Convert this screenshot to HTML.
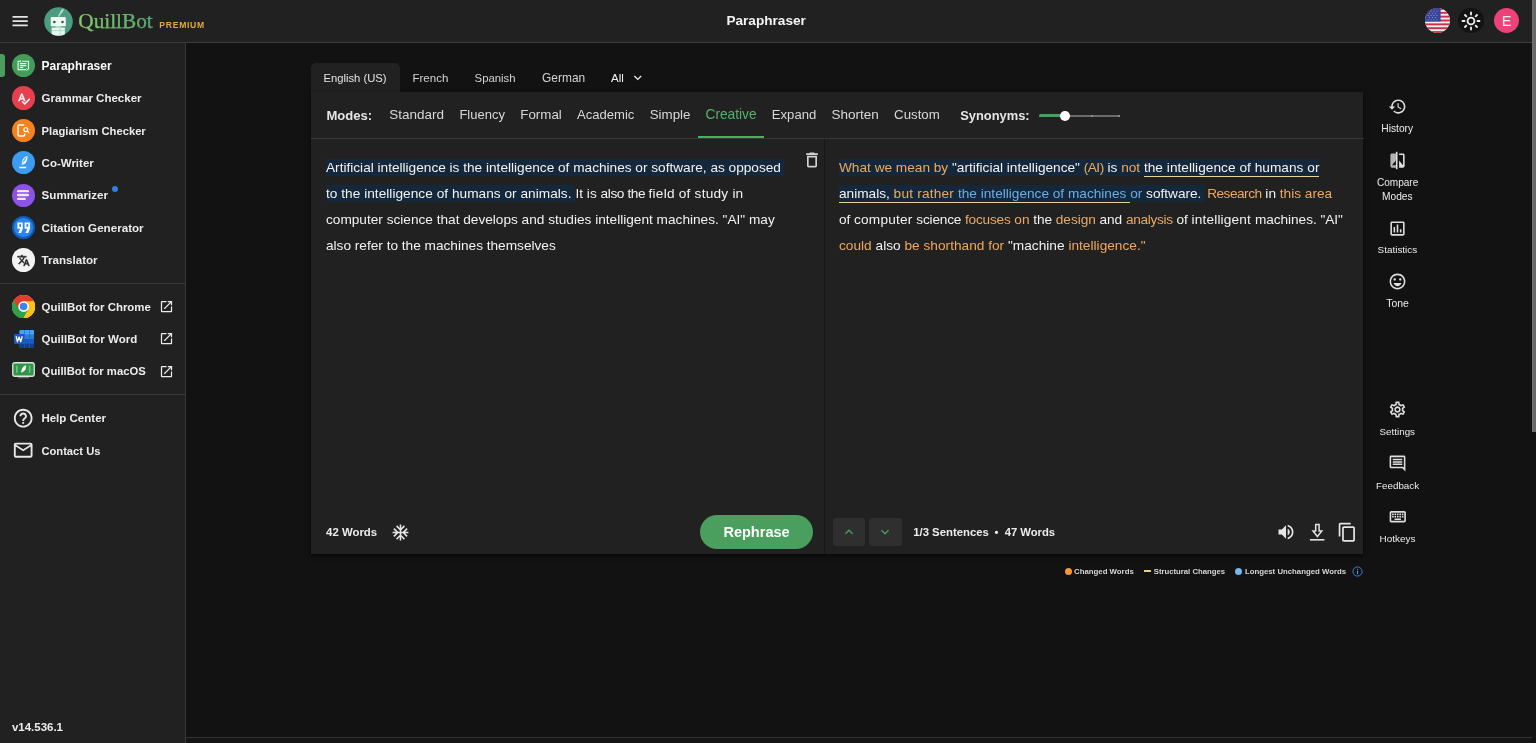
<!DOCTYPE html>
<html lang="en">
<head>
<meta charset="utf-8">
<title>Paraphraser</title>
<style>
*{box-sizing:border-box;margin:0;padding:0}
html,body{width:1536px;height:743px;overflow:hidden;background:#121212;color:#ececec;font-family:"Liberation Sans",sans-serif}
.abs{position:absolute}
.t{position:absolute;white-space:nowrap;line-height:16px}
#hdr{left:0;top:0;width:1532px;height:43px;background:#212121;border-bottom:1px solid #3c3c3c}
#side{left:0;top:43px;width:186px;height:700px;background:#212121;border-right:1px solid #383838}
.ico{position:absolute;border-radius:50%}
.sep{position:absolute;left:0;width:185px;height:1px;background:#3a3a3a}
#panel{left:310.6px;top:92px;width:1052.7px;height:462px;background:#212121;box-shadow:0 2px 5px rgba(0,0,0,.55)}
#tab{left:310.5px;top:63px;width:89px;height:30px;background:#212121;border-radius:5px 5px 0 0}
.para{position:absolute;font-size:13.65px;line-height:26px;color:#f2f2f2;white-space:nowrap}
.para div{height:26px}
.hl{background:#15283b;padding:.9px 0 1.8px}
.o{color:#ecaa60}
.bl{color:#69aee6}
.u{border-bottom:1.8px solid #e8d294;padding-bottom:1.9px}
</style>
</head>
<body>
<div id="root" style="position:absolute;left:0;top:0;width:1536px;height:743px;will-change:transform">

<div id="hdr" class="abs"></div>
<svg class="abs" style="left:10.1px;top:10.95px" width="20.3" height="20.3" viewBox="0 0 24 24" ><path fill="#e4e4e4" d="M3 18h18v-2H3v2zm0-5h18v-2H3v2zm0-7v2h18V6H3z"/></svg>
<svg class="abs" style="left:44.300px;top:6.800px" width="29" height="29" viewBox="0 0 29 29">
<defs><clipPath id="lc"><circle cx="14.500" cy="14.500" r="14.300"/></clipPath></defs>
<circle cx="14.500" cy="14.500" r="14.300" fill="#4b9c80"/>
<g clip-path="url(#lc)">
<path d="M18.300 2.300c.700-.400 1.300-.400 1.300-.400s.100 1.300-.700 2.700c-.800 1.400-3.200 4.500-3.800 5.200l-1.100-.600c.800-1.300 2.800-5.700 4.300-6.900z" fill="#d9efe3"/>
<path d="M18.600 3.400l-3.300 5.400" stroke="#4b9c80" stroke-width=".5"/>
<rect x="6.700" y="10" width="15.100" height="9.300" rx=".9" fill="#eefaf3"/>
<circle cx="10.400" cy="14.900" r="1.250" fill="#2f4d42"/><circle cx="18.500" cy="14.900" r="1.250" fill="#2f4d42"/>
<rect x="7.600" y="20.500" width="13.300" height="9" fill="#e6f6ee"/>
<rect x="11.500" y="19.300" width="5.500" height="1.200" fill="#cfe8dc"/>
<path d="M7.600 23.600h13.300M16.200 20.500v9" stroke="#9ac7b5" stroke-width=".6" fill="none"/>
</g>
</svg>
<div class="t " style="left:78.3px;top:12.92px;font-size:21.28px;font-weight:400;color:#6bb36a;font-family:'Liberation Serif',serif;background:linear-gradient(90deg,#93c96b 0%,#73b96e 45%,#4f9f78 100%);-webkit-background-clip:text;background-clip:text;-webkit-text-fill-color:transparent;-webkit-text-stroke:.25px #6bb36a;line-height:30px;margin-top:-7px;padding:0 2px;margin-left:-2px;">QuillBot</div>
<div class="t " style="left:159.3px;top:17.12px;font-size:8.6px;font-weight:700;color:#e2a93f;font-family:'Liberation Sans',sans-serif;letter-spacing:.72px">PREMIUM</div>
<div class="t " style="left:726.4px;top:13.48px;font-size:13.62px;font-weight:700;color:#f4f4f4;font-family:'Liberation Sans',sans-serif;">Paraphraser</div>
<svg class="abs" style="left:1424.500px;top:8.100px" width="25" height="25" viewBox="0 0 25 25">
<defs><clipPath id="fc"><circle cx="12.500" cy="12.500" r="12.500"/></clipPath></defs>
<g clip-path="url(#fc)">
<rect width="25" height="25" fill="#f3eded"/>
<g fill="#c8324a"><rect y="0" width="25" height="1.920"/><rect y="3.850" width="25" height="1.920"/><rect y="7.690" width="25" height="1.920"/><rect y="11.540" width="25" height="1.920"/><rect y="15.380" width="25" height="1.920"/><rect y="19.230" width="25" height="1.920"/><rect y="23.080" width="25" height="1.920"/></g>
<rect width="15.600" height="13.460" fill="#39439a"/>
<g fill="#8f9ad0"><circle cx="3" cy="3" r=".55"/><circle cx="6" cy="3" r=".55"/><circle cx="9" cy="3" r=".55"/><circle cx="12" cy="3" r=".55"/><circle cx="4.500" cy="5.200" r=".55"/><circle cx="7.500" cy="5.200" r=".55"/><circle cx="10.500" cy="5.200" r=".55"/><circle cx="3" cy="7.400" r=".55"/><circle cx="6" cy="7.400" r=".55"/><circle cx="9" cy="7.400" r=".55"/><circle cx="12" cy="7.400" r=".55"/><circle cx="4.500" cy="9.600" r=".55"/><circle cx="7.500" cy="9.600" r=".55"/><circle cx="10.500" cy="9.600" r=".55"/><circle cx="3" cy="11.800" r=".55"/><circle cx="6" cy="11.800" r=".55"/><circle cx="9" cy="11.800" r=".55"/><circle cx="12" cy="11.800" r=".55"/></g>
</g></svg>
<div class="ico" style="left:1458.400px;top:8px;width:25.400px;height:25.400px;background:#131313"></div>
<svg class="abs" style="left:1461.100px;top:10.700px" width="20" height="20" viewBox="0 0 24 24" fill="none" stroke="#f1f1f1" stroke-width="2.200" stroke-linecap="round">
<circle cx="12" cy="12" r="4.100"/>
<path d="M12 1.800v2.400M12 19.800v2.400M1.800 12h2.400M19.800 12h2.400M4.800 4.800l1.600 1.600M17.600 17.600l1.600 1.600M19.200 4.800l-1.600 1.600M6.400 17.600l-1.600 1.600"/>
</svg>
<div class="ico" style="left:1494px;top:8.200px;width:25.300px;height:25.300px;background:#ee4079"></div>
<div class="t " style="left:1406.7px;width:200px;text-align:center;top:13.28px;font-size:14.5px;font-weight:400;color:#fdeef3;font-family:'Liberation Sans',sans-serif;">E</div>
<div id="side" class="abs"></div>
<div class="abs" style="left:0;top:54px;width:4.500px;height:23px;background:#4a9d5c;border-radius:0 3px 3px 0"></div>
<div class="ico" style="left:11.800px;top:54.0px;width:23.200px;height:23.200px;background:#419e58"><svg style="position:absolute;left:5.300px;top:6.300px" width="12.600" height="11" viewBox="0 0 12.600 11" fill="none" stroke="#eef7f0" stroke-width="1.150"><path d="M3.600 1.200H1.100v8.400h7.900M5.200 1.200h6.300v8.400"/><path d="M2.900 3.700h6.400M2.900 5.600h6.400" stroke-width="1.300"/><path d="M2.900 7.500h3.400" stroke-width="1.200"/><path d="M4.400 0l-1.400 1.200 1.400 1.200M9.300 8.400l1.400 1.200-1.400 1.200" stroke-width=".8"/></svg></div>
<div class="ico" style="left:11.800px;top:86.4px;width:23.200px;height:23.200px;background:#e6404f"><svg style="position:absolute;left:4.9px;top:5.3px" width="13.6" height="13.6" viewBox="0 0 24 24"><path stroke="#fff" stroke-width=".9" fill="#fff" d="M12.450 16h2.090L9.430 3H7.570L2.460 16h2.090l1.120-3h5.640l1.140 3zm-6.020-5L8.500 5.480 10.570 11H6.430zm15.160.590l-8.090 8.090L9.830 16l-1.410 1.410 5.090 5.090L23 13l-1.410-1.410z"/></svg></div>
<div class="ico" style="left:11.800px;top:118.8px;width:23.200px;height:23.200px;background:#f5821f"><svg style="position:absolute;left:5.600px;top:5.300px" width="13" height="13" viewBox="0 0 13 13" fill="none" stroke="#fff" stroke-width="1.400"><path d="M7.200 1H2.200C1.500 1 1 1.500 1 2.200v8.600c0 .700.500 1.200 1.200 1.200h4.300c.700 0 1.200-.500 1.200-1.200V9.600"/><circle cx="8.800" cy="5.600" r="2" stroke-width="1.300"/><path d="M10.300 7.100l1.700 1.700" stroke-width="1.300"/></svg></div>
<div class="ico" style="left:11.800px;top:151.2px;width:23.200px;height:23.200px;background:#3c9cf3"><svg style="position:absolute;left:6.200px;top:4.200px" width="11" height="14" viewBox="0 0 11 14" fill="none"><path d="M9.400 .900C6.600 1.500 5 3.300 4.300 6.100L3.500 9.800l1.300-.300C7.600 8.700 9.700 6.100 9.400 .900z" fill="#fff"/><path d="M8.300 2.300L4.600 8.200M5.300 5.600l2.200-.800M6.200 3.900l1.700-.500" stroke="#3c9cf3" stroke-width=".75"/><path d="M1.200 12.500h7" stroke="#fff" stroke-width="1.500"/></svg></div>
<div class="ico" style="left:11.800px;top:183.6px;width:23.200px;height:23.200px;background:#8d52e6"><svg style="position:absolute;left:5.700px;top:6.700px" width="12" height="10" viewBox="0 0 12 10" stroke="#efe6fb" stroke-width="2.300" stroke-linecap="round"><path d="M1.100 1.200h9.800M1.100 5h9.800M1.100 8.900h6.600"/></svg></div>
<div class="ico" style="left:11.800px;top:216.0px;width:23.200px;height:23.200px;background:#2a86ec;border:2.200px solid #0f5cb8"><svg style="position:absolute;left:-1.300px;top:-3.300px" width="21.400" height="25.400" viewBox="0 0 24 24" preserveAspectRatio="none"><path fill="#fff" d="M6 17h3l2-4V7H5v6h3zm8 0h3l2-4V7h-6v6h3z"/><rect x="7.100" y="8.600" width="1.900" height="2.600" fill="#2a86ec"/><rect x="15.100" y="8.600" width="1.900" height="2.600" fill="#2a86ec"/></svg></div>
<div class="ico" style="left:11.800px;top:248.4px;width:23.200px;height:23.200px;background:#f3f3f3"><svg style="position:absolute;left:5.3px;top:5.4px" width="13" height="13" viewBox="0 0 24 24"><path stroke="#222" stroke-width=".9" fill="#222" d="M12.870 15.070l-2.540-2.510.030-.030c1.740-1.940 2.980-4.170 3.710-6.530H17V4h-7V2H8v2H1v1.990h11.170C11.500 7.920 10.440 9.750 9 11.350 8.070 10.320 7.300 9.190 6.690 8h-2c.730 1.630 1.730 3.170 2.980 4.560l-5.090 5.020L4 19l5-5 3.110 3.110.760-2.040zM18.500 10h-2L12 22h2l1.120-3h4.750L21 22h2l-4.500-12zm-2.620 7l1.620-4.330L19.120 17h-3.240z"/></svg></div>
<div class="ico" style="left:112.100px;top:186.300px;width:6px;height:6px;background:#2f7fe3"></div>
<div class="t " style="left:41.6px;top:57.64px;font-size:12.01px;font-weight:700;color:#fbfbfb;font-family:'Liberation Sans',sans-serif;">Paraphraser</div>
<div class="t " style="left:41.6px;top:90.20px;font-size:11.54px;font-weight:700;color:#ececec;font-family:'Liberation Sans',sans-serif;">Grammar Checker</div>
<div class="t " style="left:41.6px;top:122.71px;font-size:11.23px;font-weight:700;color:#ececec;font-family:'Liberation Sans',sans-serif;">Plagiarism Checker</div>
<div class="t " style="left:41.6px;top:155.02px;font-size:11.5px;font-weight:700;color:#ececec;font-family:'Liberation Sans',sans-serif;">Co-Writer</div>
<div class="t " style="left:41.6px;top:187.38px;font-size:11.6px;font-weight:700;color:#ececec;font-family:'Liberation Sans',sans-serif;">Summarizer</div>
<div class="t " style="left:41.6px;top:219.77px;font-size:11.64px;font-weight:700;color:#ececec;font-family:'Liberation Sans',sans-serif;">Citation Generator</div>
<div class="t " style="left:41.6px;top:252.19px;font-size:11.58px;font-weight:700;color:#ececec;font-family:'Liberation Sans',sans-serif;">Translator</div>
<div class="sep" style="top:283px"></div>
<svg class="abs" style="left:11.800px;top:294.900px" width="23.200" height="23.200" viewBox="0 0 48 48">
<circle cx="24" cy="24" r="24" fill="#fff"/>
<path d="M24 24L3.200 12A24 24 0 0 1 44.800 12z" fill="#e33b2e"/>
<path d="M24 24L44.800 12A24 24 0 0 1 24 48z" fill="#fbc116"/>
<path d="M24 24L24 48A24 24 0 0 1 3.200 12z" fill="#2ea24b"/>
<path d="M24 13h20.300A24 24 0 0 0 3.200 12L13.400 29.600z" fill="#e33b2e"/>
<path d="M33.500 29.500L23.400 47.990A24 24 0 0 0 44.300 13H24z" fill="#fbc116"/>
<path d="M14.500 29.500L3.200 12A24 24 0 0 0 23.400 47.990L33.500 29.500z" fill="#2ea24b"/>
<circle cx="24" cy="24" r="11" fill="#fff"/><circle cx="24" cy="24" r="7.800" fill="#3f83f1"/>
</svg>
<svg class="abs" style="left:13.500px;top:329.800px" width="20.500" height="18" viewBox="0 0 41 36">
<rect x="11" y="0" width="30" height="36" rx="3" fill="#2b7cd3"/>
<rect x="11" y="0" width="30" height="9" rx="3" fill="#41a5ee"/>
<rect x="11" y="18" width="30" height="9" fill="#185abd"/>
<rect x="11" y="27" width="30" height="9" rx="3" fill="#103f91"/>
<path d="M21 0v36M31 0v36" stroke="#1f64c2" stroke-width="1.200"/>
<rect x="0" y="8" width="21" height="20" rx="2.200" fill="#185abd"/>
<path d="M4.200 12.500l2.700 11 3.300-9.500 3.300 9.500 2.900-11" fill="none" stroke="#fff" stroke-width="2.600" stroke-linejoin="round"/>
</svg>
<svg class="abs" style="left:12px;top:361.600px" width="23" height="17" viewBox="0 0 46 34">
<rect x="1.500" y="1.500" width="43" height="27" rx="4.500" fill="#2f9446" stroke="#dfe7e1" stroke-width="2.600"/>
<path d="M28.500 6.500c-6 1.500-9.500 6-10.500 15l3-1.500c5-2.500 8-6.500 7.500-13.500z" fill="#fff"/>
<rect x="8" y="7.500" width="3.400" height="14" fill="#6cbf7e"/><rect x="33.600" y="7.500" width="3.400" height="14" fill="#6cbf7e"/>
<rect x="12" y="30.600" width="22" height="1.800" fill="#7d8a80"/>
</svg>
<div class="t " style="left:41.6px;top:298.54px;font-size:11.44px;font-weight:700;color:#ececec;font-family:'Liberation Sans',sans-serif;">QuillBot for Chrome</div>
<svg class="abs" style="left:158.6px;top:298.8px" width="15" height="15" viewBox="0 0 24 24" ><path fill="#ececec" d="M19 19H5V5h7V3H5c-1.110 0-2 .900-2 2v14c0 1.100.890 2 2 2h14c1.100 0 2-.900 2-2v-7h-2v7zM14 3v2h3.590l-9.830 9.830 1.410 1.410L19 6.410V10h2V3h-7z"/></svg>
<div class="t " style="left:41.6px;top:331.02px;font-size:11.5px;font-weight:700;color:#ececec;font-family:'Liberation Sans',sans-serif;">QuillBot for Word</div>
<svg class="abs" style="left:158.6px;top:331.3px" width="15" height="15" viewBox="0 0 24 24" ><path fill="#ececec" d="M19 19H5V5h7V3H5c-1.110 0-2 .900-2 2v14c0 1.100.890 2 2 2h14c1.100 0 2-.900 2-2v-7h-2v7zM14 3v2h3.590l-9.830 9.830 1.410 1.410L19 6.410V10h2V3h-7z"/></svg>
<div class="t " style="left:41.6px;top:363.48px;font-size:11.3px;font-weight:700;color:#ececec;font-family:'Liberation Sans',sans-serif;">QuillBot for macOS</div>
<svg class="abs" style="left:158.6px;top:363.7px" width="15" height="15" viewBox="0 0 24 24" ><path fill="#ececec" d="M19 19H5V5h7V3H5c-1.110 0-2 .900-2 2v14c0 1.100.890 2 2 2h14c1.100 0 2-.900 2-2v-7h-2v7zM14 3v2h3.590l-9.830 9.830 1.410 1.410L19 6.410V10h2V3h-7z"/></svg>
<div class="sep" style="top:394px"></div>
<svg class="abs" style="left:12.1px;top:407px" width="22.4" height="22.4" viewBox="0 0 24 24" ><path fill="#e8e8e8" d="M11 18h2v-2h-2v2zm1-16C6.480 2 2 6.480 2 12s4.480 10 10 10 10-4.480 10-10S17.520 2 12 2zm0 18c-4.410 0-8-3.590-8-8s3.590-8 8-8 8 3.590 8 8-3.590 8-8 8zm0-14c-2.210 0-4 1.790-4 4h2c0-1.100.900-2 2-2s2 .900 2 2c0 2-3 1.750-3 5h2c0-2.250 3-2.500 3-5 0-2.210-1.790-4-4-4z"/></svg>
<svg class="abs" style="left:12.1px;top:439.3px" width="22.4" height="22.4" viewBox="0 0 24 24" ><path fill="#e8e8e8" d="M20 4H4c-1.100 0-1.990.900-1.990 2L2 18c0 1.100.900 2 2 2h16c1.100 0 2-.900 2-2V6c0-1.100-.900-2-2-2zm0 14H4V8l8 5 8-5v10zm-8-7L4 6h16l-8 5z"/></svg>
<div class="t " style="left:41.4px;top:410.40px;font-size:11.53px;font-weight:700;color:#ececec;font-family:'Liberation Sans',sans-serif;">Help Center</div>
<div class="t " style="left:41.4px;top:442.82px;font-size:11.2px;font-weight:700;color:#ececec;font-family:'Liberation Sans',sans-serif;">Contact Us</div>
<div class="t " style="left:12px;top:719.33px;font-size:11.46px;font-weight:700;color:#ececec;font-family:'Liberation Sans',sans-serif;">v14.536.1</div>
<div id="tab" class="abs"></div><div id="panel" class="abs"></div>
<div class="t " style="left:323.4px;top:70.09px;font-size:11.28px;font-weight:400;color:#e3e3e3;font-family:'Liberation Sans',sans-serif;">English (US)</div>
<div class="t " style="left:412.5px;top:70.02px;font-size:11.5px;font-weight:400;color:#d4d4d4;font-family:'Liberation Sans',sans-serif;">French</div>
<div class="t " style="left:474.6px;top:70.07px;font-size:11.35px;font-weight:400;color:#d4d4d4;font-family:'Liberation Sans',sans-serif;">Spanish</div>
<div class="t " style="left:542.1px;top:69.87px;font-size:11.93px;font-weight:400;color:#d4d4d4;font-family:'Liberation Sans',sans-serif;">German</div>
<div class="t " style="left:611px;top:69.98px;font-size:11.61px;font-weight:400;color:#f3f3f3;font-family:'Liberation Sans',sans-serif;">All</div>
<svg class="abs" style="left:630.35px;top:69.95px" width="15.5" height="15.5" viewBox="0 0 24 24" ><path fill="#ededed" d="M16.590 8.590L12 13.170 7.410 8.590 6 10l6 6 6-6z"/></svg>
<div class="t " style="left:326.5px;top:107.67px;font-size:13.06px;font-weight:700;color:#e6e6e6;font-family:'Liberation Sans',sans-serif;">Modes:</div>
<div class="t " style="left:389.3px;top:106.72px;font-size:13.5px;font-weight:400;color:#d8d8d8;font-family:'Liberation Sans',sans-serif;">Standard</div>
<div class="t " style="left:459.4px;top:106.89px;font-size:13.02px;font-weight:400;color:#d8d8d8;font-family:'Liberation Sans',sans-serif;">Fluency</div>
<div class="t " style="left:520.3px;top:106.78px;font-size:13.34px;font-weight:400;color:#d8d8d8;font-family:'Liberation Sans',sans-serif;">Formal</div>
<div class="t " style="left:577px;top:106.87px;font-size:13.07px;font-weight:400;color:#d8d8d8;font-family:'Liberation Sans',sans-serif;">Academic</div>
<div class="t " style="left:649.7px;top:106.77px;font-size:13.35px;font-weight:400;color:#d8d8d8;font-family:'Liberation Sans',sans-serif;">Simple</div>
<div class="t " style="left:705.5px;top:106.65px;font-size:13.72px;font-weight:400;color:#59b26b;font-family:'Liberation Sans',sans-serif;">Creative</div>
<div class="t " style="left:771.8px;top:106.85px;font-size:13.12px;font-weight:400;color:#d8d8d8;font-family:'Liberation Sans',sans-serif;">Expand</div>
<div class="t " style="left:831.5px;top:106.71px;font-size:13.53px;font-weight:400;color:#d8d8d8;font-family:'Liberation Sans',sans-serif;">Shorten</div>
<div class="t " style="left:894.1px;top:106.81px;font-size:13.26px;font-weight:400;color:#d8d8d8;font-family:'Liberation Sans',sans-serif;">Custom</div>
<div class="abs" style="left:697.500px;top:136px;width:66.500px;height:2px;background:#4cae61"></div>
<div class="t " style="left:960.2px;top:107.54px;font-size:12.88px;font-weight:700;color:#e6e6e6;font-family:'Liberation Sans',sans-serif;">Synonyms:</div>
<div class="abs" style="left:1039px;top:114.900px;width:81.300px;height:1.800px;background:#6a6a6a;border-radius:1px"></div>
<div class="abs" style="left:1039px;top:114.300px;width:24px;height:3px;background:#4a9e5e;border-radius:1.500px"></div>
<div class="abs" style="left:1091px;top:114.800px;width:2px;height:2px;background:#9a9a9a;border-radius:1px"></div>
<div class="abs" style="left:1118.300px;top:114.800px;width:2px;height:2px;background:#9a9a9a;border-radius:1px"></div>
<div class="ico" style="left:1060.400px;top:110.900px;width:9.800px;height:9.800px;background:#fff"></div>
<div class="abs" style="left:310.500px;top:138px;width:1053px;height:1px;background:#373737"></div>
<div class="abs" style="left:824px;top:139px;width:1px;height:415px;background:#181818"></div>
<svg class="abs" style="left:801.85px;top:149.7px" width="20" height="20" viewBox="0 0 24 24" ><path fill="#d2d2d2" d="M6 19c0 1.100.900 2 2 2h8c1.100 0 2-.900 2-2V7H6v12zM8 9h8v10H8V9zm7.500-5l-1-1h-5l-1 1H5v2h14V4h-3.500z"/></svg>
<div class="para" style="left:326px;top:154.600px">
<div id="L1"><span class="hl">Artificial intelligence is the intelligence of machines or software, as opposed</span><span class="hl" style="padding-right:3px"></span></div>
<div id="L2" style="letter-spacing:.034px"><span class="hl">to the intelligence of humans or animals. </span>It is <span style="letter-spacing:-.4px">also the </span><span style="letter-spacing:.23px">field of study </span>in</div>
<div id="L3">computer science that develops and studies intelligent machines. "AI" may</div>
<div id="L4">also refer to the machines themselves</div>
</div>
<div class="para" style="left:839px;top:154.600px">
<div id="R1"><span class="hl"><span class="o">What we mean by</span> "artificial intelligence" <span class="o" style="letter-spacing:-.5px">(AI)</span> is <span class="o">not</span> <span class="u" style="letter-spacing:.04px">the intelligence of humans or</span></span></div>
<div id="R2"><span class="hl"><span class="u">animals, <span class="o" style="letter-spacing:.2px">but rather</span><span style="letter-spacing:.2px"> </span><span class="bl">the intelligence of machines</span> </span><span class="bl">or</span> software. </span><span class="o" style="letter-spacing:-.5px;margin-left:2px">Research</span> in <span class="o">this area</span></div>
<div id="R3" style="letter-spacing:-.043px">of <span style="letter-spacing:.2px">computer</span> <span style="letter-spacing:-.18px">science </span><span class="o"><span style="letter-spacing:-.18px">focuses</span> on</span> the <span class="o">design</span> and <span class="o" style="letter-spacing:-.3px">analysis</span> of <span style="letter-spacing:.16px">intelligent </span>machines. "AI"</div>
<div id="R4" style="letter-spacing:.022px"><span class="o">could</span> also <span class="o">be shorthand for</span> "machine <span class="o">intelligence."</span></div>
</div>
<div class="t " style="left:326.1px;top:524.45px;font-size:11.4px;font-weight:700;color:#ececec;font-family:'Liberation Sans',sans-serif;">42 Words</div>
<svg class="abs" style="left:390.6px;top:522.9px" width="19" height="19" viewBox="0 0 24 24" ><path fill="#e6e6e6" d="M22 11h-4.170l3.240-3.240-1.410-1.420L15 11h-2V9l4.660-4.660-1.420-1.410L13 6.170V2h-2v4.170L7.760 2.930 6.340 4.340 11 9v2H9L4.340 6.340 2.930 7.760 6.170 11H2v2h4.170l-3.240 3.240 1.410 1.420L9 13h2v2l-4.660 4.660 1.420 1.410L11 17.830V22h2v-4.170l3.240 3.240 1.420-1.410L13 15v-2h2l4.660 4.660 1.410-1.420L17.830 13H22z"/></svg>
<div class="abs" style="left:700px;top:515px;width:113px;height:33.700px;border-radius:17px;background:#4a9e5e"></div>
<div class="t " style="left:723.4px;top:524.06px;font-size:14.55px;font-weight:700;color:#ffffff;font-family:'Liberation Sans',sans-serif;">Rephrase</div>
<div class="abs" style="left:833px;top:517.800px;width:32.400px;height:28.200px;border-radius:3px;background:#2f2f2f"></div>
<svg class="abs" style="left:841.2px;top:524px" width="16" height="16" viewBox="0 0 24 24" ><path fill="#4a9e5e" d="M12 8l-6 6 1.410 1.410L12 10.830l4.590 4.580L18 14z"/></svg>
<div class="abs" style="left:869.2px;top:517.800px;width:32.400px;height:28.200px;border-radius:3px;background:#2f2f2f"></div>
<svg class="abs" style="left:877.4000000000001px;top:524px" width="16" height="16" viewBox="0 0 24 24" ><path fill="#4a9e5e" d="M16.590 8.590L12 13.170 7.410 8.590 6 10l6 6 6-6z"/></svg>
<div class="t " style="left:913.2px;top:523.97px;font-size:11.35px;font-weight:700;color:#ececec;font-family:'Liberation Sans',sans-serif;">1/3 Sentences</div>
<div class="t " style="left:994.5px;top:523.97px;font-size:11.35px;font-weight:700;color:#ececec;font-family:'Liberation Sans',sans-serif;">•</div>
<div class="t " style="left:1004.7px;top:524.00px;font-size:11.26px;font-weight:700;color:#ececec;font-family:'Liberation Sans',sans-serif;">47 Words</div>
<svg class="abs" style="left:1275.7px;top:522.3px" width="20" height="20" viewBox="0 0 24 24" ><path fill="#e6e6e6" d="M3 9v6h4l5 5V4L7 9H3zm13.500 3c0-1.770-1.020-3.290-2.500-4.030v8.050c1.480-.730 2.500-2.250 2.500-4.020zM14 3.230v2.060c2.890.860 5 3.540 5 6.710s-2.110 5.850-5 6.710v2.060c4.010-.910 7-4.490 7-8.770s-2.990-7.860-7-8.770z"/></svg>
<svg class="abs" style="left:1308px;top:522px" width="18" height="20" viewBox="0 0 18 20" fill="none" stroke="#e2e2e2" stroke-width="1.500"><path d="M7.700 2.400h3.400v6.500h2.700L9.400 14.500 5 8.900h2.700z"/><path d="M1.900 17.800h14.500" stroke-width="1.600"/></svg>
<svg class="abs" style="left:1337px;top:521.8px" width="20.5" height="20.5" viewBox="0 0 24 24" ><path fill="#e6e6e6" d="M16 1H4c-1.100 0-2 .900-2 2v14h2V3h12V1zm3 4H8c-1.100 0-2 .900-2 2v14c0 1.100.900 2 2 2h11c1.100 0 2-.900 2-2V7c0-1.100-.900-2-2-2zm0 16H8V7h11v14z"/></svg>
<div class="ico" style="left:1064.600px;top:568.200px;width:7px;height:7px;background:#f5973b"></div>
<div class="t " style="left:1074px;top:563.99px;font-size:7.82px;font-weight:700;color:#d6d6d6;font-family:'Liberation Sans',sans-serif;">Changed Words</div>
<div class="abs" style="left:1144.100px;top:570px;width:6.500px;height:2px;background:#e7cf86"></div>
<div class="t " style="left:1153.8px;top:564.02px;font-size:7.73px;font-weight:700;color:#d6d6d6;font-family:'Liberation Sans',sans-serif;">Structural Changes</div>
<div class="ico" style="left:1234.800px;top:568.200px;width:7px;height:7px;background:#74b6f0"></div>
<div class="t " style="left:1244.9px;top:564.00px;font-size:7.8px;font-weight:700;color:#d6d6d6;font-family:'Liberation Sans',sans-serif;">Longest Unchanged Words</div>
<svg class="abs" style="left:1352px;top:566.200px" width="11" height="11" viewBox="0 0 11 11"><circle cx="5.500" cy="5.500" r="4.600" fill="none" stroke="#3f7fd0" stroke-width="1"/><rect x="5" y="4.700" width="1.100" height="3.400" fill="#5a97e0"/><rect x="5" y="2.800" width="1.100" height="1.100" fill="#5a97e0"/></svg>
<svg class="abs" style="left:1387.6px;top:97.3px" width="19" height="19" viewBox="0 0 24 24" ><path fill="#dedede" d="M13 3c-4.97 0-9 4.03-9 9H1l3.89 3.89.07.14L9 12H6c0-3.87 3.13-7 7-7s7 3.13 7 7-3.13 7-7 7c-1.93 0-3.68-.79-4.94-2.06l-1.42 1.42C8.27 19.99 10.51 21 13 21c4.97 0 9-4.03 9-9s-4.03-9-9-9zm-1 5v5l4.280 2.540.720-1.210-3.500-2.080V8H12z"/></svg>
<div class="t " style="left:1297.2px;width:200px;text-align:center;top:120.65px;font-size:10.25px;font-weight:400;color:#ececec;font-family:'Liberation Sans',sans-serif;">History</div>
<svg class="abs" style="left:1387.600px;top:151px" width="19" height="19" viewBox="0 0 24 24"><path fill="#b4b4b4" d="M10 3H5c-1.100 0-2 .900-2 2v14c0 1.100.900 2 2 2h5V3zm0 15H5l5-6v6z"/><path fill="#e0e0e0" d="M10 1h2v22h-2zM19 3h-5v2h5v13l-5-6v9h5c1.100 0 2-.900 2-2V5c0-1.100-.900-2-2-2z"/></svg>
<div class="t " style="left:1297.6px;width:200px;text-align:center;top:174.71px;font-size:10.07px;font-weight:400;color:#ececec;font-family:'Liberation Sans',sans-serif;">Compare</div>
<div class="t " style="left:1297.3px;width:200px;text-align:center;top:189.17px;font-size:10.19px;font-weight:400;color:#ececec;font-family:'Liberation Sans',sans-serif;">Modes</div>
<svg class="abs" style="left:1387.6px;top:218.5px" width="19" height="19" viewBox="0 0 24 24" ><path fill="#dedede" d="M19 3H5c-1.100 0-2 .900-2 2v14c0 1.100.900 2 2 2h14c1.100 0 2-.900 2-2V5c0-1.100-.900-2-2-2zm0 16H5V5h14v14zM7 10h2v7H7zm4-3h2v10h-2zm4 6h2v4h-2z"/></svg>
<div class="t " style="left:1297.4px;width:200px;text-align:center;top:242.26px;font-size:9.92px;font-weight:400;color:#ececec;font-family:'Liberation Sans',sans-serif;">Statistics</div>
<svg class="abs" style="left:1387.6px;top:272.3px" width="19" height="19" viewBox="0 0 24 24" ><path fill="#dedede" d="M15.500 11c.830 0 1.500-.670 1.500-1.500S16.330 8 15.500 8 14 8.670 14 9.500s.670 1.500 1.500 1.500zm-7 0c.830 0 1.500-.670 1.500-1.500S9.330 8 8.500 8 7 8.670 7 9.500 7.670 11 8.500 11zM11.990 2C6.470 2 2 6.480 2 12s4.470 10 9.990 10C17.520 22 22 17.520 22 12S17.520 2 11.990 2zM12 20c-4.420 0-8-3.580-8-8s3.580-8 8-8 8 3.580 8 8-3.580 8-8 8zm-5-6c.780 2.340 2.720 4 5 4s4.220-1.660 5-4H7z"/></svg>
<div class="t " style="left:1297.6px;width:200px;text-align:center;top:295.59px;font-size:10.42px;font-weight:400;color:#ececec;font-family:'Liberation Sans',sans-serif;">Tone</div>
<svg class="abs" style="left:1387.6px;top:400.1px" width="19" height="19" viewBox="0 0 24 24" ><path fill="#dedede" d="M19.430 12.980c.040-.320.070-.640.070-.980 0-.340-.030-.660-.070-.980l2.110-1.650c.190-.150.240-.420.120-.640l-2-3.460c-.090-.160-.260-.250-.440-.250-.060 0-.120.010-.170.030l-2.490 1c-.520-.400-1.080-.730-1.690-.980l-.380-2.650C14.460 2.180 14.250 2 14 2h-4c-.250 0-.460.180-.490.420l-.380 2.650c-.610.250-1.170.590-1.690.980l-2.490-1c-.060-.020-.120-.030-.180-.030-.170 0-.340.090-.430.250l-2 3.460c-.130.220-.070.490.120.640l2.110 1.650c-.040.320-.070.650-.070.980 0 .330.030.660.070.980l-2.110 1.650c-.190.150-.240.420-.120.640l2 3.460c.090.160.260.250.440.250.060 0 .120-.010.170-.030l2.490-1c.520.400 1.080.730 1.690.980l.380 2.650c.030.240.240.420.490.420h4c.250 0 .460-.180.490-.420l.380-2.650c.610-.250 1.170-.590 1.690-.980l2.490 1c.060.020.120.030.180.030.170 0 .340-.090.430-.250l2-3.460c.120-.220.070-.490-.120-.640l-2.110-1.650zm-1.980-1.710c.040.310.050.520.050.730 0 .210-.020.430-.050.730l-.140 1.130.890.700 1.080.840-.700 1.210-1.270-.510-1.040-.420-.900.680c-.430.320-.840.560-1.250.730l-1.060.430-.160 1.130-.200 1.350h-1.400l-.190-1.350-.160-1.130-1.060-.430c-.430-.180-.830-.410-1.230-.710l-.910-.700-1.060.430-1.270.510-.700-1.210 1.080-.840.890-.700-.140-1.130c-.030-.310-.050-.540-.050-.740s.020-.430.050-.730l.140-1.130-.890-.700-1.080-.840.700-1.210 1.270.510 1.040.420.900-.680c.430-.320.840-.560 1.250-.730l1.060-.430.160-1.130.200-1.350h1.390l.190 1.350.160 1.130 1.060.430c.430.180.830.410 1.230.710l.910.700 1.060-.430 1.270-.510.700 1.210-1.070.850-.890.700.140 1.130zM12 8c-2.210 0-4 1.790-4 4s1.790 4 4 4 4-1.790 4-4-1.790-4-4-4zm0 6c-1.100 0-2-.900-2-2s.900-2 2-2 2 .900 2 2-.900 2-2 2z"/></svg>
<div class="t " style="left:1297.3px;width:200px;text-align:center;top:423.90px;font-size:9.82px;font-weight:400;color:#ececec;font-family:'Liberation Sans',sans-serif;">Settings</div>
<svg class="abs" style="left:1388.1px;top:453.6px" width="19" height="19" viewBox="0 0 24 24" transform="scale(-1,1)"><path fill="#dedede" d="M4 4h16v12H5.170L4 17.170V4m0-2c-1.100 0-1.990.900-1.990 2L2 22l4-4h14c1.100 0 2-.900 2-2V4c0-1.100-.900-2-2-2H4zm2 10h12v2H6v-2zm0-3h12v2H6V9zm0-3h12v2H6V6z"/></svg>
<div class="t " style="left:1297.6px;width:200px;text-align:center;top:477.80px;font-size:9.81px;font-weight:400;color:#ececec;font-family:'Liberation Sans',sans-serif;">Feedback</div>
<svg class="abs" style="left:1387.6px;top:507.2px" width="19.5" height="19.5" viewBox="0 0 24 24" ><path fill="#dedede" d="M20 7v10H4V7h16m0-2H4c-1.100 0-1.990.900-1.990 2L2 17c0 1.100.900 2 2 2h16c1.100 0 2-.900 2-2V7c0-1.100-.900-2-2-2zm-9 3h2v2h-2zm0 3h2v2h-2zM8 8h2v2H8zm0 3h2v2H8zm-3 0h2v2H5zm0-3h2v2H5zm3 6h8v2H8zm6-3h2v2h-2zm0-3h2v2h-2zm3 3h2v2h-2zm0-3h2v2h-2z"/></svg>
<div class="t " style="left:1297.5px;width:200px;text-align:center;top:531.27px;font-size:9.91px;font-weight:400;color:#ececec;font-family:'Liberation Sans',sans-serif;">Hotkeys</div>
<div class="abs" style="left:186px;top:737px;width:1346px;height:1px;background:#323232"></div>
<div class="abs" style="left:186px;top:738px;width:1346px;height:5px;background:#151515"></div>
<div class="abs" style="left:1532px;top:0;width:4px;height:743px;background:#121212"></div>
<div class="abs" style="left:1532px;top:0;width:4px;height:432px;background:linear-gradient(90deg,#737373,#686868 45%,#666666)"></div>
</div>
</body>
</html>
